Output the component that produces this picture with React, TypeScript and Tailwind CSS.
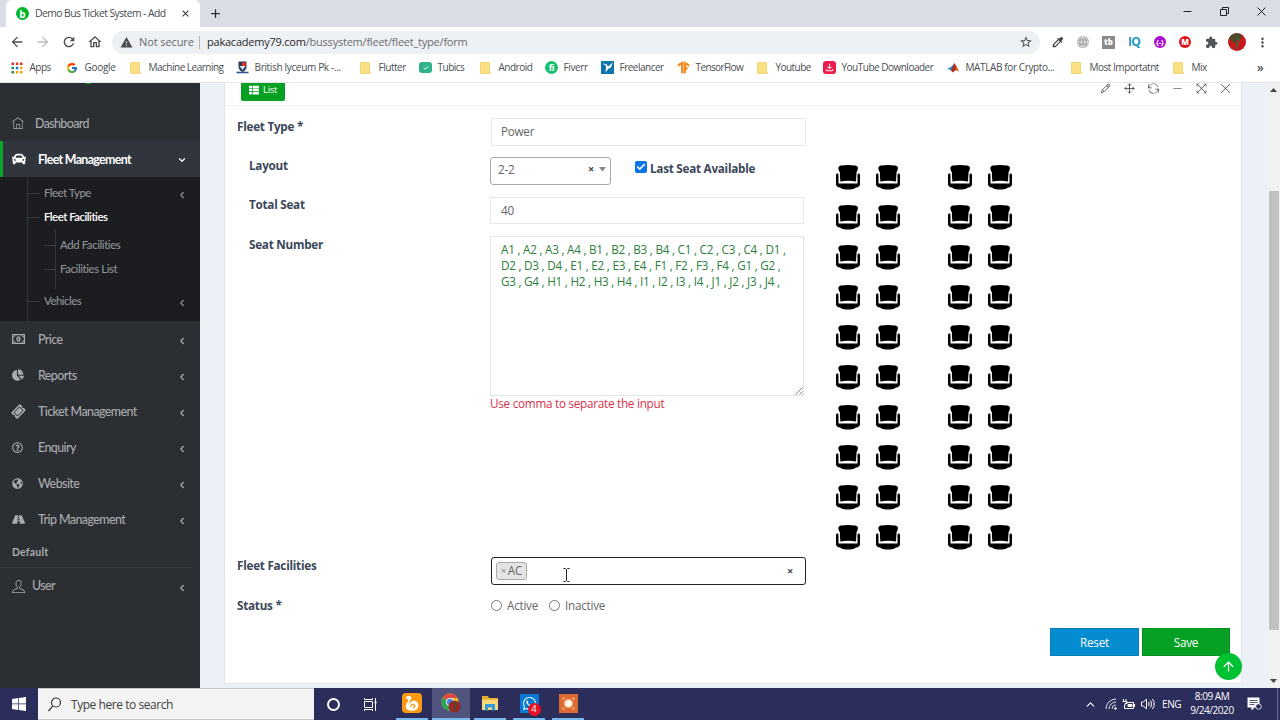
import React from 'react';
import {
  MdArrowBack,
  MdArrowForward,
  MdRefresh,
  MdOutlineHome,
  MdWarning,
  MdStarBorder,
  MdExtension,
  MdMoreVert,
  MdClose,
  MdAdd,
  MdColorize,
  MdOutlineFileDownload,
} from 'react-icons/md';
import {
  FaCar,
  FaChartPie,
  FaTicketAlt,
  FaRegQuestionCircle,
  FaGlobeAmericas,
  FaRoad,
  FaThList,
  FaWhatsapp,
} from 'react-icons/fa';
import {
  TfiHome,
  TfiUser,
  TfiPencil,
  TfiReload,
  TfiMinus,
  TfiFullscreen,
  TfiClose,
} from 'react-icons/tfi';
import { FcGoogle } from 'react-icons/fc';
import { SiTensorflow } from 'react-icons/si';
import { Check, ChevronDown, ChevronLeft, ChevronUp, ArrowUp, Globe, Move } from 'lucide-react';

const FolderIcon = () => (
  <svg width="11" height="12" viewBox="0 0 11 12">
    <path d="M0.5 0.5h9v9.5h0.8v1.5H0.5z" fill="#fbdf83" stroke="#eccb63" strokeWidth="0.7" />
  </svg>
);

const AppsIcon = () => (
  <svg width="12" height="12" viewBox="0 0 12 12">
    <path d="M0.5 0.5h2.5v2.5h-2.5zM4.8 0.5h2.5v2.5h-2.5zM9 0.5h2.5v2.5h-2.5z" fill="#d93025" />
    <path d="M0.5 4.8h2.5v2.5h-2.5zM0.5 9h2.5v2.5h-2.5z" fill="#1e8e3e" />
    <path d="M4.8 4.8h2.5v2.5h-2.5z" fill="#1a73e8" />
    <path d="M9 4.8h2.5v2.5h-2.5zM4.8 9h2.5v2.5h-2.5zM9 9h2.5v2.5h-2.5z" fill="#f2a60c" />
  </svg>
);

const CrestIcon = () => (
  <svg width="13" height="13" viewBox="0 0 13 13">
    <path d="M2.5 0.5h8v5c0 3-2 4.5-4 5.5c-2-1-4-2.5-4-5.5z" fill="#2b3a5a" />
    <path d="M6 1.5h3.8v3.5h-3.8z" fill="#e5322d" />
    <path d="M3.5 5h6l-3 4z" fill="#dfe6f2" />
    <path d="M0.5 11.5h12" stroke="#33558f" strokeWidth="1.6" />
  </svg>
);

const TubicsIcon = () => (
  <span className="flex h-[11px] w-[13px] items-center justify-center rounded-[3px] bg-[#2fb489]">
    <Check className="h-[6px] w-[6px] text-white" strokeWidth={4} />
  </span>
);

const FiverrIcon = () => (
  <span className="flex h-[13px] w-[13px] items-center justify-center rounded-full bg-[#18bf73] text-[9px] font-bold leading-none text-white">
    fi
  </span>
);

const FreelancerIcon = () => (
  <svg width="13" height="13" viewBox="0 0 13 13">
    <path d="M0 0h13v13H0z" fill="#0e75ad" />
    <path d="M1.5 2.5l3 0.5 1.5 2.5zM5 2.5l2 3 5-4-2.5 5.5-2 0.5-3 4 0.5-4.5z" fill="#fff" />
  </svg>
);

const DownloaderIcon = () => (
  <span className="flex h-[13px] w-[13px] items-center justify-center rounded-[3px] bg-[#f01a4b]">
    <MdOutlineFileDownload className="h-[11px] w-[11px] text-white" />
  </span>
);

const MatlabIcon = () => (
  <svg width="13" height="12" viewBox="0 0 13 12">
    <path d="M0.5 6.5l3.5-1.5 3-3.5-1.5 6-1.5 1z" fill="#2d87c3" />
    <path d="M4 8.5l3.5-7.5 1.2 2 3.3 6.5-3.2-1.5-3 2.5z" fill="#b0301b" />
    <path d="M8 1l3.8 8.5-2.3-1.7z" fill="#ef7b28" />
  </svg>
);

const bookmarks = [
  { label: 'Apps', icon: <AppsIcon />, box: 'w-[55px] tracking-[-0.5px]' },
  { label: 'Google', icon: <FcGoogle className="h-3 w-3" />, box: 'w-[64px] tracking-[-0.3px]' },
  { label: 'Machine Learning', icon: <FolderIcon />, box: 'w-[106px] tracking-[-0.5px]' },
  { label: 'British lyceum Pk -...', icon: <CrestIcon />, box: 'w-[124px] tracking-[-0.33px]' },
  { label: 'Flutter', icon: <FolderIcon />, box: 'w-[59px] tracking-[-0.48px]' },
  { label: 'Tubics', icon: <TubicsIcon />, box: 'w-[61px] tracking-[-0.5px]' },
  { label: 'Android', icon: <FolderIcon />, box: 'w-[65px] tracking-[-0.5px]' },
  { label: 'Fiverr', icon: <FiverrIcon />, box: 'w-[56px] tracking-[-0.4px]' },
  { label: 'Freelancer', icon: <FreelancerIcon />, box: 'w-[76px] tracking-[-0.5px]' },
  { label: 'TensorFlow', icon: <SiTensorflow className="h-[13px] w-[13px] text-[#f58a1f]" />, box: 'w-[80px] tracking-[-0.6px]' },
  { label: 'Youtube', icon: <FolderIcon />, box: 'w-[66px] tracking-[-0.55px]' },
  { label: 'YouTube Downloader', icon: <DownloaderIcon />, box: 'w-[124px] tracking-[-0.5px]' },
  { label: 'MATLAB for Crypto...', icon: <MatlabIcon />, box: 'w-[124px] tracking-[-0.38px]' },
  { label: 'Most Importatnt', icon: <FolderIcon />, box: 'w-[102px] tracking-[-0.48px]' },
  { label: 'Mix', icon: <FolderIcon />, box: 'w-[86px] tracking-[-0.48px]' },
];

const ChromeHeader = () => (
  <header className="h-[83px] shrink-0 border-b border-[#e3e5e8] bg-white font-['Open_Sans',sans-serif] text-[#4a4d51]">
    <div className="flex h-[27px] bg-[#dadde5]">
      <div className="ml-[6px] flex h-[27px] w-[194px] items-center rounded-t-[6px] bg-white pl-[10px]">
        <span className="flex h-[13px] w-[13px] items-center justify-center rounded-full bg-[#00b42b] text-[10px] font-bold leading-none text-white">
          b
        </span>
        <span className="ml-[6px] w-[145px] whitespace-nowrap text-[10.4px] tracking-[-0.58px]">
          Demo Bus Ticket System - Add
        </span>
        <MdClose className="h-[11px] w-[11px] text-[#333]" />
      </div>
      <MdAdd className="ml-[8px] mt-[6px] h-[15px] w-[15px] text-[#2d2f33]" />
      <div className="ml-auto mt-[6px] flex gap-[26px] pr-[13px] text-[#222]">
        <svg width="11" height="11" viewBox="0 0 11 11"><path d="M1.5 5.5h8" stroke="currentColor" /></svg>
        <svg width="11" height="11" viewBox="0 0 11 11" fill="none" stroke="currentColor">
          <path d="M1.5 3.5h6v6h-6zM3.5 3.5v-2h6v6h-2" />
        </svg>
        <svg width="11" height="11" viewBox="0 0 11 11" stroke="currentColor"><path d="M1.5 1.5l8 8M9.5 1.5l-8 8" /></svg>
      </div>
    </div>
    <div className="flex h-[29px] items-center pt-[1px]">
      <div className="flex w-[112px] gap-[10px] pl-[9px]">
        <MdArrowBack className="h-4 w-4 text-[#4a4d51]" />
        <MdArrowForward className="h-4 w-4 text-[#b9bbbe]" />
        <MdRefresh className="h-4 w-4" />
        <MdOutlineHome className="h-4 w-4" />
      </div>
      <div className="flex h-[23px] w-[928px] items-center rounded-full bg-[#eef1f4] pl-[8px] text-[11px]">
        <MdWarning className="h-[13px] w-[13px]" />
        <span className="ml-[6px] w-[60px] whitespace-nowrap tracking-[-0.1px] text-[#66696d]">Not secure</span>
        <span className="h-[13px] w-px bg-[#b4b6ba]" />
        <span className="ml-[7px] whitespace-nowrap tracking-[-0.22px] text-[#6b6e72]">
          <span className="text-[#26282b]">pakacademy79.com</span>/bussystem/fleet/fleet_type/form
        </span>
        <MdStarBorder className="ml-auto mr-[7px] h-[14px] w-[14px]" />
      </div>
      <div className="ml-[11px] flex items-center">
        <MdColorize className="h-[14px] w-[14px] text-[#444]" />
        <span className="ml-[12px] flex h-[12px] w-[12px] items-center justify-center rounded-full bg-[#a0a2a4]">
          <Globe className="h-[12px] w-[12px] text-[#eee]" strokeWidth={1.5} />
        </span>
        <span className="ml-[13px] flex h-[13px] w-[13px] items-center justify-center bg-[#8a8a8a] text-[8px] font-extrabold leading-none text-white">
          tb
        </span>
        <span className="ml-[13px] w-[12px] text-[12px] font-bold leading-none tracking-[-0.8px] text-[#2298c4]">IQ</span>
        <span className="ml-[14px] flex h-[12px] w-[12px] items-center justify-center rounded-full bg-[#aa11cf] text-[7px] font-bold leading-none text-white">
          {'{-}'}
        </span>
        <span className="ml-[13px] flex h-[12px] w-[12px] items-center justify-center rounded-full bg-[#dd0e14] text-[8px] font-extrabold leading-none text-white">
          M
        </span>
        <MdExtension className="ml-[14px] h-[13px] w-[13px] text-[#505357]" />
        <svg className="ml-[10px]" width="18" height="18" viewBox="0 0 18 18">
          <circle cx="9" cy="9" r="9" fill="#c5191b" />
          <path d="M1 5a9 9 0 0 1 13-3l-2 5-3-1-2 5-3-3z" fill="#4a4a2c" />
          <path d="M8 4l3 3-2 4-1 5" stroke="#2f6b37" strokeWidth="1.5" fill="none" />
        </svg>
        <MdMoreVert className="ml-[9px] h-[15px] w-[15px]" />
      </div>
    </div>
    <div className="flex h-[23px] items-center pl-[11px] text-[10px]">
      {bookmarks.map((b, i) => (
        <div key={i} className={`${b.box} flex shrink-0 items-center whitespace-nowrap`}>
          <span className="flex w-[18.5px] shrink-0">{b.icon}</span>
          {b.label}
        </div>
      ))}
      <span className="-ml-[2px] text-[12px] font-semibold leading-none">»</span>
    </div>
  </header>
);

const MoneyIcon = () => (
  <svg width="13" height="10" viewBox="0 0 13 10" fill="none" stroke="currentColor">
    <path d="M0.600 0.600h11.800v8.800H0.600z" strokeWidth="1.200" />
    <path d="M1 3.200Q3 3 3.200 1M12 3.200Q10 3 9.800 1M1 6.800Q3 7 3.200 9M12 6.800Q10 7 9.800 9" />
    <ellipse cx="6.500" cy="5" rx="2.100" ry="2.700" fill="currentColor" stroke="none" />
    <path d="M6.500 3.500v3" stroke="#2b2e33" strokeWidth="0.800" />
  </svg>
);

const mainMenu = [
  { label: 'Price', icon: <MoneyIcon /> },
  { label: 'Reports', icon: <FaChartPie className="h-[12px] w-[12px]" /> },
  { label: 'Ticket Management', icon: <FaTicketAlt className="h-[13px] w-[13px] -rotate-45" /> },
  { label: 'Enquiry', icon: <FaRegQuestionCircle className="h-[11px] w-[11px]" /> },
  { label: 'Website', icon: <FaGlobeAmericas className="h-[11px] w-[11px]" /> },
  { label: 'Trip Management', icon: <FaRoad className="h-[13px] w-[13px]" /> },
];

const Arrow = () => <ChevronLeft className="ml-auto mr-[13px] mt-[3px] h-[10px] w-[10px]" strokeWidth={3} />;

const Sidebar = () => (
  <aside className="w-[200px] shrink-0 overflow-hidden bg-[#2b2e33] font-['Lato',sans-serif] text-[12.4px] font-medium text-[#a9abae]">
    <div className="flex h-[22px] pl-[86px]">
      <span className="h-[1px] w-[5px] rounded-b-full bg-[#00b42b]" />
    </div>
    <div className="flex h-9 items-center pl-[12px]">
      <TfiHome className="h-[12px] w-[12px]" />
      <span className="ml-[11px] mt-[2px] tracking-[-0.6px]">Dashboard</span>
    </div>
    <div className="flex h-9 items-center border-l-[3px] border-[#0ea32b] bg-[#31353d] pl-[9px] font-bold text-white">
      <FaCar className="h-[14px] w-[14px]" />
      <span className="ml-[12px] mt-[2px] whitespace-nowrap tracking-[-0.66px]">Fleet Management</span>
      <ChevronDown className="ml-auto mr-[13px] mt-[2px] h-[10px] w-[10px]" strokeWidth={3} />
    </div>
    <div className="h-36 bg-[#1b1d21] pl-[27px] text-[11.4px] tracking-[-0.5px] text-[#8f9194]">
      <div className="h-full border-l border-[#34373b] pt-[4px]">
        <div className="flex h-6 items-center">
          <span className="mr-[4px] h-px w-[12px] bg-[#34373b]" />
          Fleet Type
          <Arrow />
        </div>
        <div className="flex h-6 items-center font-semibold text-white">
          <span className="mr-[4px] h-px w-[12px] bg-[#34373b]" />
          Fleet Facilities
        </div>
        <div className="ml-[27px] h-[60px] border-l border-[#34373b] pt-[4px]">
          {['Add Facilities', 'Facilities List'].map((item) => (
            <div key={item} className="-ml-[12px] flex h-6 items-center">
              <span className="mr-[4px] h-px w-[12px] bg-[#34373b]" />
              <span className="tracking-[-0.42px]">{item}</span>
            </div>
          ))}
        </div>
        <div className="flex h-6 items-center">
          <span className="mr-[4px] h-px w-[12px] bg-[#34373b]" />
          Vehicles
          <Arrow />
        </div>
      </div>
    </div>
    {mainMenu.map((item) => (
      <div key={item.label} className="flex h-9 items-center pl-[12px]">
        <span className="w-[26px]">{item.icon}</span>
        <span className="mt-[2px] whitespace-nowrap tracking-[-0.55px]">{item.label}</span>
        <Arrow />
      </div>
    ))}
    <div className="mr-[8px] flex h-[31px] items-center border-b border-[#34373c] pl-[12px] pt-[2px] text-[10.5px] font-bold tracking-[0.2px]">
      Default
    </div>
    <div className="flex h-9 items-center pl-[12px]">
      <TfiUser className="h-[13px] w-[13px]" />
      <span className="ml-[7px] mt-[1px] tracking-[-0.6px]">User</span>
      <Arrow />
    </div>
  </aside>
);

const seatNumbers = [
  'A1 , A2 , A3 , A4 , B1 , B2 , B3 , B4 , C1 , C2 , C3 , C4 , D1 ,',
  'D2 , D3 , D4 , E1 , E2 , E3 , E4 , F1 , F2 , F3 , F4 , G1 , G2 ,',
  'G3 , G4 , H1 , H2 , H3 , H4 , I1 , I2 , I3 , I4 , J1 , J2 , J3 , J4 ,',
];

const Seat = () => (
  <svg width="24" height="25" viewBox="0 0 24 25">
    <path d="M2.5 2.2Q3 0.8 5 0.6Q12-0.4 19 0.6Q21.2 0.8 21.8 2.2Q22.2 5 20.6 7L20 16.5Q12 15.2 4.3 16.5L3.8 7Q2 5 2.5 2.2z" />
    <path d="M0 10Q0 8.6 1.3 8.6Q2.5 8.6 2.5 10V18.6H21.5V10Q21.5 8.6 22.7 8.6Q24 8.6 24 10V19.5Q23.5 22 20 22.5Q17.5 24.6 12 24.6Q6.5 24.6 4 22.5Q0.5 22 0 19.5z" />
  </svg>
);

const label = 'h-[18px] font-bold text-[#3b475a] leading-[17px]';

const FleetForm = () => (
  <main className="relative flex-1 bg-[#ecf0f7] pl-[24px] font-['Open_Sans',sans-serif] text-[11.7px] tracking-[-0.25px] text-[#666]">
    <div className="h-[601px] w-[1018px] border-x border-b border-[#dfe3e9] bg-white">
      <div className="flex h-[23px] justify-between border-b border-[#eceef0] pl-[16px] pr-[10px]">
        <button className="flex h-[18px] w-[44px] items-center justify-center gap-[4px] rounded-b-[2px] bg-[#06a124] pb-[4px] text-[9.4px] tracking-[-0.3px] text-white">
          <FaThList className="h-[10px] w-[10px]" />
          List
        </button>
        <div className="flex gap-[13px] text-[#50545a]">
          <TfiPencil className="h-[11px] w-[11px]" />
          <Move className="h-[11px] w-[11px]" />
          <TfiReload className="h-[11px] w-[11px]" />
          <TfiMinus className="h-[11px] w-[11px]" />
          <TfiFullscreen className="h-[11px] w-[11px]" />
          <TfiClose className="h-[11px] w-[11px]" />
        </div>
      </div>

      <div className="flex pl-[12px] pt-[12px]">
        <div className={`w-[254px] ${label}`}>Fleet Type *</div>
        <div className="flex h-[28px] w-[315px] items-center border border-[#e6e8ea] pl-[9px]">Power</div>
      </div>

      <div className="flex h-[411px]">
        <div className="w-[611px] pl-[24px] pt-[11px]">
          <div className="flex h-[39px]">
            <div className={`w-[241px] ${label}`}>Layout</div>
            <div className="flex h-[28px] w-[121px] items-center rounded-[3px] border border-[#aaa] pb-[3px] pl-[7px]">
              2-2
              <span className="ml-auto text-[11px] font-bold text-[#444]">×</span>
              <svg className="ml-[5px] mr-[4px]" width="7" height="5" viewBox="0 0 7 5"><path d="M0 0h7l-3.5 4.5z" fill="#888" /></svg>
            </div>
            <span className="ml-[24px] mt-[4px] flex h-[12px] w-[12px] items-center justify-center rounded-[2px] bg-[#0b74e4]">
              <Check className="h-[10px] w-[10px] text-white" strokeWidth={4} />
            </span>
            <span className={`ml-[3px] mt-[3px] whitespace-nowrap ${label}`}>Last Seat Available</span>
          </div>
          <div className="flex h-[40px]">
            <div className={`w-[241px] ${label}`}>Total Seat</div>
            <div className="mt-[1px] flex h-[27px] w-[314px] items-center border border-[#e6e8ea] pl-[10px]">40</div>
          </div>
          <div className="flex">
            <div className={`w-[241px] ${label}`}>Seat Number</div>
            <div>
              <div className="relative h-[160px] w-[314px] border border-[#e1e4e6] pl-[10px] pt-[4px] leading-4 tracking-[-0.235px] text-[#2b803a]">
                {seatNumbers.map((line) => (
                  <div key={line} className="whitespace-nowrap">{line}</div>
                ))}
                <svg className="absolute bottom-0 right-0" width="8" height="8" viewBox="0 0 8 8">
                  <path d="M0.5 7.5l7-7M4.5 7.5l3-3" stroke="#888" />
                </svg>
              </div>
              <div className="leading-[14px] text-[#d9304a]">Use comma to separate the input</div>
            </div>
          </div>
        </div>
        <div className="flex flex-col gap-[15px] pt-[19px]">
          {Array.from({ length: 10 }, (_, row) => (
            <div key={row} className="flex gap-4">
              <Seat />
              <Seat />
              <span className="w-4" />
              <Seat />
              <Seat />
            </div>
          ))}
        </div>
      </div>

      <div className="flex h-[40px] pl-[12px]">
        <div className={`w-[254px] ${label}`}>Fleet Facilities</div>
        <div className="flex h-[28px] w-[315px] items-center rounded-[3px] border border-[#222] pl-[4px] pr-[12px]">
          <span className="flex h-[18px] w-[31px] items-center justify-center gap-[2px] rounded-[3px] border border-[#aaa] bg-[#e4e4e4]">
            <span className="text-[9px] text-[#888]">×</span>
            AC
          </span>
          <svg className="ml-[36px] mt-[7px]" width="7" height="14" viewBox="0 0 7 14" fill="none" stroke="#222">
            <path d="M0.5 0.5h2l1 1 1-1h2M3.5 1.5v11M0.5 13.5h2l1-1 1 1h2" />
          </svg>
          <span className="ml-auto text-[11px] font-bold text-[#444]">×</span>
        </div>
      </div>
      <div className="flex h-[31px] pl-[12px]">
        <div className={`w-[254px] ${label}`}>Status *</div>
        <div className="flex h-[17px] items-center">
          <span className="h-[11px] w-[11px] rounded-full border border-[#777]" />
          <span className="ml-[5px] w-[42px]">Active</span>
          <span className="h-[11px] w-[11px] rounded-full border border-[#777]" />
          <span className="ml-[5px]">Inactive</span>
        </div>
      </div>
      <div className="flex justify-end gap-[3px] pr-[11px] text-white">
        <button className="h-[28px] w-[89px] border border-[#0a7bbd] bg-[#048bd0] pt-[1px]">Reset</button>
        <button className="h-[28px] w-[88px] border border-[#079022] bg-[#06a124] pt-[1px]">Save</button>
      </div>
    </div>
    <button className="absolute left-[1015px] top-[570px] flex h-[27px] w-[27px] items-center justify-center rounded-full bg-[#00c132] text-white">
      <ArrowUp className="h-[15px] w-[15px]" strokeWidth={2} />
    </button>
  </main>
);

const Scrollbar = () => (
  <div className="flex w-[13px] shrink-0 flex-col items-center bg-[#f1f1f1]">
    <svg className="mt-[5px]" width="7" height="4" viewBox="0 0 7 4"><path d="M0 4l3.5-4 3.5 4z" fill="#444" /></svg>
    <div className="mt-[99px] h-[439px] w-[10px] bg-[#c1c1c1]" />
    <svg className="mt-auto mb-[5px]" width="7" height="4" viewBox="0 0 7 4"><path d="M0 0h7l-3.5 4z" fill="#444" /></svg>
  </div>
);

const taskApps = [
  {
    box: 'w-[32px] border-[#76b9ed]',
    icon: (
      <svg width="20" height="20" viewBox="0 0 20 20">
        <rect width="20" height="20" rx="4" fill="#fb9a12" />
        <path d="M4.500 3.500C7 1.500 10.500 3.500 9 6.500C7.500 8.500 6.500 9.500 7.500 11C8 8.500 11 7 13.500 8C17 9.500 17.500 14 14.500 16.500C11 18.500 6 18 4.500 15.500C3 13 4.500 11 5.500 9C6.500 7.500 6.500 6.500 6 6C5 6.500 3.500 5.500 4.500 3.500z" fill="#fff" />
        <path d="M9 14C8.500 12 10.500 10.500 12 11.500C13.500 12.800 12.500 15 10.800 14.500" fill="none" stroke="#fb9a12" strokeWidth="1.300" />
      </svg>
    ),
  },
  {
    box: 'ml-[4px] w-[38px] border-[#76b9ed] bg-[#51547c]',
    icon: (
      <svg width="20" height="20" viewBox="0 0 20 20">
        <circle cx="9" cy="9" r="8.500" fill="#efc02d" />
        <path d="M9 9L1.600 4.800A8.500 8.500 0 0 1 16.400 5H9z" fill="#dd4b3e" />
        <path d="M9 9L1.600 4.800A8.500 8.500 0 0 0 8 17.500z" fill="#31a452" />
        <circle cx="9" cy="9" r="4" fill="#fff" />
        <circle cx="9" cy="9" r="3.200" fill="#4587ec" />
        <circle cx="13.500" cy="13.500" r="6" fill="#9b2824" />
        <path d="M12 9l3 2-1 3-1 4" fill="none" stroke="#31572e" strokeWidth="1.500" />
      </svg>
    ),
  },
  {
    box: 'ml-[4px] w-[32px] border-[#76b9ed]',
    icon: (
      <svg width="18" height="18" viewBox="0 0 18 18">
        <path d="M1 2h6l1 2h9v12H1z" fill="#e8ac2c" />
        <path d="M1 5.500h16v10.500H1z" fill="#fbd878" />
        <path d="M4 10h10v6.500h-3v-3H7v3H4z" fill="#2f9be0" />
      </svg>
    ),
  },
  {
    box: 'ml-[7px] w-[32px] border-[#76b9ed]',
    icon: (
      <span className="relative flex h-[19px] w-[19px] items-center justify-center bg-[#0878d4]">
        <FaWhatsapp className="h-[15px] w-[15px] text-[#dff6e7]" />
        <span className="absolute left-[8px] top-[9px] flex h-[13px] w-[13px] items-center justify-center rounded-full bg-[#e81123] text-[9.5px] text-white">
          4
        </span>
      </span>
    ),
  },
  {
    box: 'ml-[7px] w-[32px] border-[#76b9ed]',
    icon: (
      <svg width="19" height="19" viewBox="0 0 19 19">
        <path d="M0 0h19v19H0z" fill="#dc6a32" />
        <path d="M4 6V4h2M13 4h2v2M15 13v2h-2M6 15H4v-2" fill="none" stroke="#f7bd91" />
        <circle cx="9.500" cy="9.500" r="4.800" fill="#f4a26c" />
        <circle cx="9.500" cy="9.500" r="3.500" fill="#fff8ea" />
      </svg>
    ),
  },
];

const Taskbar = () => (
  <footer className="flex h-8 shrink-0 bg-[#2b2d5b] font-['Open_Sans',sans-serif] text-white">
    <div className="flex w-[38px] items-center justify-center">
      <svg width="14" height="14" viewBox="0 0 14 14" fill="#fff">
        <path d="M0 2l6-0.900v5.500H0zM6.700 1L14 0v6.600H6.700zM0 7.300h6v5.600L0 12zM6.700 7.300H14V14l-7.300-1z" />
      </svg>
    </div>
    <div className="flex w-[276px] items-center border-y border-[#c9c9cc] bg-[#f3f3f3] pl-[10px] text-[#404040]">
      <svg width="13" height="15" viewBox="0 0 13 15" fill="none" stroke="#333" strokeWidth="1.200">
        <circle cx="8" cy="5.500" r="4.500" />
        <path d="M4.800 8.800L0.500 14" />
      </svg>
      <span className="ml-[10px] mt-[2px] whitespace-nowrap text-[12px] tracking-[-0.45px]">Type here to search</span>
    </div>
    <div className="flex w-[38px] items-center justify-center">
      <span className="h-[13px] w-[13px] rounded-full border-2 border-white" />
    </div>
    <div className="flex w-[38px] items-center justify-center">
      <svg width="14" height="13" viewBox="0 0 14 13" fill="none" stroke="#fff">
        <path d="M0.500 3.500h8v6h-8zM0.500 0v1.500h8V0M0.500 13v-1.500h8V13M11.500 0v13" />
        <path d="M10.500 4.500h2" strokeWidth="2" />
      </svg>
    </div>
    <div className="ml-[6px] flex">
      {taskApps.map((app, i) => (
        <div key={i} className={`${app.box} flex items-center justify-center border-b-2`}>
          {app.icon}
        </div>
      ))}
    </div>
    <div className="ml-auto flex items-center">
      <ChevronUp className="h-[13px] w-[13px]" strokeWidth={2} />
      <svg className="ml-[8px]" width="12" height="12" viewBox="0 0 12 12" fill="none" stroke="#dfe0ea">
        <path d="M1 11A10 10 0 0 1 11 1M4 11A7 7 0 0 1 11 4M7 11A4 4 0 0 1 11 7" />
        <circle cx="10.500" cy="10.500" r="0.900" fill="#fff" />
      </svg>
      <svg className="ml-[5px]" width="14" height="11" viewBox="0 0 14 11" fill="none" stroke="#fff">
        <path d="M4.500 3.500h7v6h-9V6M12.500 5v3M1.500 0v2M4 0v2M0.500 2.500h4.500v2h-2v2" />
        <path d="M6 5.500h4v2H6z" fill="#fff" />
      </svg>
      <svg className="ml-[5px]" width="14" height="12" viewBox="0 0 14 12" fill="none" stroke="#fff">
        <path d="M0.500 4v4h2l3 3V1l-3 3zM7.500 4q1.500 2 0 4M9.500 2.500q2.500 3.500 0 7M11.500 1q3.500 5 0 10" />
      </svg>
      <span className="ml-[7px] w-[26px] text-[10px] tracking-[-0.4px]">ENG</span>
      <div className="w-[48px] whitespace-nowrap pb-[2px] text-center text-[10px] leading-[14px] tracking-[-0.45px]">
        <div>8:09 AM</div>
        <div>9/24/2020</div>
      </div>
      <svg className="ml-[11px] mr-[15px]" width="15" height="14" viewBox="0 0 15 14">
        <path d="M0.500 0.500h12v10h-5l-3 3v-3h-4z" fill="#fff" />
        <path d="M2.500 3.500h8M2.500 5.500h8M2.500 7.500h5" stroke="#2b2d5b" strokeWidth="0.800" />
        <circle cx="11.500" cy="9.500" r="2.800" fill="#2b2d5b" stroke="#fff" strokeWidth="0.800" />
      </svg>
      <span className="h-8 w-px bg-[#6b6d90]" />
      <span className="w-[2px]" />
    </div>
  </footer>
);

const App: React.FC = () => {
  return (
    <div className="flex h-[720px] w-[1280px] flex-col overflow-hidden bg-white">
      <ChromeHeader />
      <div className="flex h-[605px] overflow-hidden">
        <Sidebar />
        <FleetForm />
        <Scrollbar />
      </div>
      <Taskbar />
    </div>
  );
};

export default App;
